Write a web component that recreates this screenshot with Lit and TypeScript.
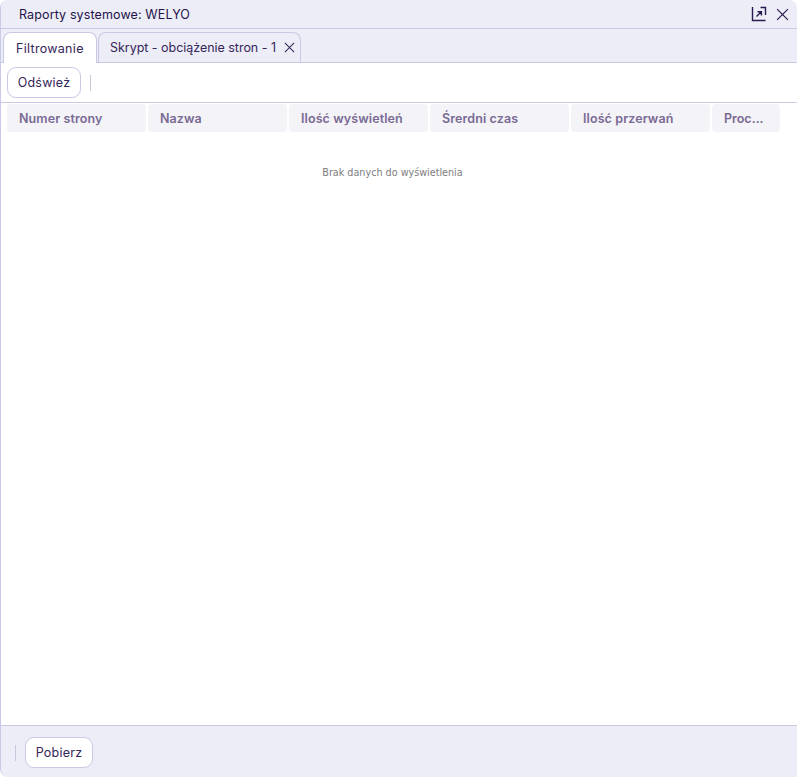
import { LitElement, html, css } from "lit";
import { customElement } from "lit/decorators.js";

const FONT = css`Inter, "Noto Sans", sans-serif`;

@customElement("app-root")
export class AppRoot extends LitElement {
  static styles = css`
    :host { display: block; width: 797px; height: 777px; font-family: ${FONT}; color: #2b1a52; background: #fff; }
    * { box-sizing: border-box; }
    .win { height: 777px; display: flex; flex-direction: column; border-left: 1px solid #c9c9e8; border-radius: 8px 8px 0 8px; overflow: hidden; background: #fff; }
    .title { height: 29px; flex: none; display: flex; align-items: center; justify-content: space-between; background: #ecedf7; border-bottom: 1px solid #c9c9e4; padding: 0 8px 0 18px; }
    .title span { font-size: 12.5px; letter-spacing: 0.12px; color: #24134a; }
    .icons { display: flex; align-items: center; gap: 9px; }
    svg { display: block; }
    .tabs { height: 34px; flex: none; display: flex; align-items: flex-end; gap: 1px; padding-left: 2px; background: #ecedf7; border-bottom: 1px solid #c9c9e4; }
    .tab { width: 203px; height: 30px; display: flex; align-items: center; border: 1px solid #c9c9e4; border-bottom: none; border-radius: 8px 8px 0 0; font-size: 12.5px; letter-spacing: -0.03px; color: #35265a; padding: 0 0 0 11px; gap: 8px; white-space: nowrap; }
    .tab.active { background: #fff; height: 31px; margin-bottom: -1px; width: 94px; padding: 0 0 0 12px; letter-spacing: 0.3px; }
    .toolbar { height: 40px; flex: none; display: flex; align-items: center; gap: 9px; padding: 0 6px; border-bottom: 1px solid #c9c9e4; }
    .btn { height: 31px; display: flex; align-items: center; justify-content: center; background: #fff; border: 1px solid #c9c9e4; border-radius: 9px; font-size: 12.5px; letter-spacing: 0.22px; color: #35265a; }
    .btn.r { width: 74px; }
    .btn.p { width: 68px; }
    .sep { width: 1px; height: 16px; background: #c9c9de; }
    .grid { flex: none; display: flex; gap: 2px; padding: 1px 6px 0; }
    .th { width: 139px; height: 28px; display: flex; align-items: center; padding-left: 12px; background: #f3f3f8; border-radius: 4px; font-size: 12.5px; font-weight: 600; letter-spacing: 0.1px; color: #7a6a94; white-space: nowrap; }
    .th.last { width: 68px; letter-spacing: 0; }
    .body { flex: 1; display: flex; justify-content: center; padding: 34px 13px 0 0; }
    .empty { font-family: "DejaVu Sans", sans-serif; font-stretch: condensed; font-size: 10.7px; line-height: 14px; color: #7d7d7d; }
    .footer { height: 52px; flex: none; display: flex; align-items: center; gap: 9px; padding: 1px 0 0 14px; background: #ecedf7; border-top: 1px solid #c9c9e4; }
    .footer .sep { margin-top: 1px; }
  `;

  render() {
    const heads = ["Numer strony", "Nazwa", "Ilość wyświetleń", "Śrerdni czas", "Ilość przerwań"];
    const x = (s: number, c = "#2b1a52") => html`<svg width=${s} height=${s} viewBox="0 0 12 12" fill="none" stroke=${c} stroke-width="1.1"><path d="M1 1L11 11M11 1L1 11" /></svg>`;
    return html`
      <div class="win">
        <div class="title">
          <span>Raporty systemowe: WELYO</span>
          <div class="icons">
            <svg width="16" height="16" viewBox="0 0 16 16" fill="none" stroke="#2b1a52" stroke-width="1.4">
              <path d="M1.5 1v13.5H14.5" />
              <path d="M9.5 1.5H14.5V9" />
              <path d="M5.5 10.5L10 6M6.5 5.7H10.4V9.6" />
            </svg>
            ${x(13)}
          </div>
        </div>
        <div class="tabs">
          <div class="tab active">Filtrowanie</div>
          <div class="tab">Skrypt - obciążenie stron - 1 ${x(11, "#35265a")}</div>
        </div>
        <div class="toolbar">
          <div class="btn r">Odśwież</div>
          <div class="sep"></div>
        </div>
        <div class="grid">
          ${heads.map((h) => html`<div class="th">${h}</div>`)}
          <div class="th last">Proc...</div>
        </div>
        <div class="body"><div class="empty">Brak danych do wyświetlenia</div></div>
        <div class="footer">
          <div class="sep"></div>
          <div class="btn p">Pobierz</div>
        </div>
      </div>
    `;
  }
}
